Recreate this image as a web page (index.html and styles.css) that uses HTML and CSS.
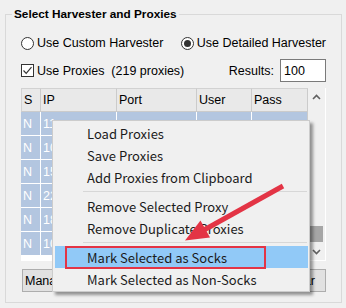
FILE: index.html
```html
<!DOCTYPE html>
<html lang="en">

<head>
    <meta charset="UTF-8">
    <meta name="viewport" content="width=device-width, initial-scale=1.0">
    <title>Select Harvester and Proxies</title>
    <link rel="stylesheet" href="styles.css">
</head>

<body>
    <div class="window">
        <fieldset class="group">
            <legend>Select Harvester and Proxies</legend>

            <div class="radios">
                <label class="opt first"><span class="radio"></span>Use Custom Harvester</label>
                <label class="opt"><span class="radio on"></span>Use Detailed Harvester</label>
            </div>

            <div class="proxy-row">
                <label class="opt">
                    <span class="check">
                        <svg width="11" height="11" viewBox="0 0 11 11">
                            <path d="M1.5 5.5 L4.2 8.3 L9.5 2.2" fill="none" stroke="#333" stroke-width="1.2" />
                        </svg>
                    </span>Use Proxies&nbsp; (219 proxies)
                </label>
                <div class="results">Results: <span class="field">100</span></div>
            </div>

            <div class="grid">
                <div class="table">
                    <div class="row head">
                        <span class="c s">S</span>
                        <span class="c ip">IP</span>
                        <span class="c port">Port</span>
                        <span class="c user">User</span>
                        <span class="c pass">Pass</span>
                    </div>
                    <div class="row sel">
                        <span class="c s">N</span><span class="c ip">11</span><span class="c port"></span><span class="c user"></span><span class="c pass"></span>
                    </div>
                    <div class="row sel">
                        <span class="c s">N</span><span class="c ip">10</span><span class="c port"></span><span class="c user"></span><span class="c pass"></span>
                    </div>
                    <div class="row sel">
                        <span class="c s">N</span><span class="c ip">15</span><span class="c port"></span><span class="c user"></span><span class="c pass"></span>
                    </div>
                    <div class="row sel">
                        <span class="c s">N</span><span class="c ip">22</span><span class="c port"></span><span class="c user"></span><span class="c pass"></span>
                    </div>
                    <div class="row sel">
                        <span class="c s">N</span><span class="c ip">18</span><span class="c port"></span><span class="c user"></span><span class="c pass"></span>
                    </div>
                    <div class="row sel">
                        <span class="c s">N</span><span class="c ip">10</span><span class="c port"></span><span class="c user"></span><span class="c pass"></span>
                    </div>
                </div>
                <div class="vscroll">
                    <span class="sbtn">
                        <svg width="9" height="6" viewBox="0 0 9 6">
                            <path d="M1 5 L4.5 1.5 L8 5" fill="none" stroke="#606060" stroke-width="1.6" />
                        </svg>
                    </span>
                    <span class="track"><span class="thumb"></span></span>
                    <span class="sbtn">
                        <svg width="9" height="6" viewBox="0 0 9 6">
                            <path d="M1 1 L4.5 4.5 L8 1" fill="none" stroke="#606060" stroke-width="1.6" />
                        </svg>
                    </span>
                </div>
            </div>

            <div class="buttons">
                <button class="btn manage">Manage...</button>
                <button class="btn clear">Clear</button>
            </div>
        </fieldset>

        <!-- context menu over the grid -->
        <ul class="menu">
            <li>Load Proxies</li>
            <li>Save Proxies</li>
            <li>Add Proxies from Clipboard</li>
            <li class="sep"></li>
            <li>Remove Selected Proxy</li>
            <li>Remove Duplicate Proxies</li>
            <li class="sep"></li>
            <li class="hover">Mark Selected as Socks<span class="mark"></span></li>
            <li>Mark Selected as Non-Socks</li>
        </ul>

        <svg class="arrow" width="346" height="308" viewBox="0 0 346 308">
            <line x1="283" y1="186" x2="204" y2="230" stroke="#e33445" stroke-width="5" />
            <polygon points="185,240.5 210,237.5 200.5,220.5" fill="#e33445" />
        </svg>
    </div>
</body>

</html>
```

FILE: styles.css
```css
* {
    margin: 0;
    padding: 0;
    box-sizing: border-box;
}

body {
    background-color: #f0f0f0;
    font-family: "Liberation Sans", Arial, sans-serif;
    font-size: 12.5px;
    color: #000;
}

ul,
li {
    list-style: none;
}

.window {
    position: relative;
    width: 346px;
    height: 308px;
    padding: 6px 4px 0 5px;
}

.group {
    width: 337px;
    min-width: 0;
    height: 297px;
    border: 1px solid #d9d9d9;
    padding: 13px 15px 0 15px;
}

.group legend {
    margin-left: -9px;
    padding: 0 2px;
    font-size: 11.8px;
    font-weight: bold;
    line-height: 16px;
}

.radios {
    display: flex;
    height: 16px;
    align-items: center;
}

.opt {
    display: flex;
    align-items: center;
    white-space: nowrap;
}

.opt.first {
    width: 160px;
}

.radio {
    width: 13px;
    height: 13px;
    margin-right: 3px;
    border: 1px solid #333;
    border-radius: 50%;
    background-color: #fff;
    display: flex;
    justify-content: center;
    align-items: center;
}

.radio.on::after {
    content: "";
    width: 7px;
    height: 7px;
    border-radius: 50%;
    background-color: #333;
}

.check {
    width: 13px;
    height: 13px;
    margin-right: 3px;
    border: 1px solid #333;
    background-color: #fff;
    display: flex;
}

.proxy-row {
    margin-top: 8px;
    height: 23px;
    display: flex;
    justify-content: space-between;
    align-items: center;
}

.results {
    display: flex;
    align-items: center;
}

.field {
    width: 46px;
    height: 23px;
    margin-left: 6px;
    padding-left: 3px;
    border: 1px solid #7a7a7a;
    background-color: #fff;
    display: flex;
    align-items: center;
}

.grid {
    margin-top: 6px;
    height: 173px;
    display: flex;
    background-color: #fff;
}

.table {
    width: 287px;
}

.row {
    height: 24px;
    display: flex;
}

.c {
    height: 24px;
    padding-left: 2px;
    display: flex;
    align-items: center;
    overflow: hidden;
    white-space: nowrap;
}

.s {
    width: 20px;
}

.ip {
    width: 76px;
}

.port {
    width: 80px;
}

.user {
    width: 55px;
}

.pass {
    width: 56px;
}

.head .c {
    background-color: #e9e9e9;
    border-top: 1px solid #d2d2d2;
    border-right: 1px solid #cbcbcb;
    border-bottom: 1px solid #cbcbcb;
}

.head .s {
    border-left: 1px solid #d2d2d2;
}

.sel .c {
    background-color: #b3c6e0;
    color: #fff;
    border-right: 1px solid #fff;
    border-bottom: 1px solid #fff;
}

.sel .pass {
    border-right: 1px solid #cbcbcb;
}

.vscroll {
    width: 18px;
    height: 172px;
    background-color: #f0f0f0;
    border-right: 1px solid #fff;
    display: flex;
    flex-direction: column;
}

.sbtn {
    height: 17px;
    display: flex;
    justify-content: center;
    align-items: center;
}

.track {
    flex: 1;
    display: flex;
    flex-direction: column;
    justify-content: flex-end;
    padding: 0 2px 1px 2px;
}

.thumb {
    height: 16px;
    background-color: #a6a6a6;
}

.buttons {
    margin-top: 8px;
    display: flex;
    justify-content: space-between;
    padding-left: 1px;
}

.btn {
    height: 23px;
    padding-left: 2px;
    border: 1px solid #adadad;
    background-color: #e1e1e1;
    font-family: "Liberation Sans", Arial, sans-serif;
    font-size: 12.5px;
    color: #000;
    text-align: left;
}

.manage {
    width: 80px;
}

.clear {
    width: 60px;
    padding-left: 18px;
}

.menu {
    position: absolute;
    left: 52px;
    top: 120px;
    width: 258px;
    height: 172px;
    padding: 1px 0;
    border: 1px solid #cccccc;
    background-color: #f0f0f0;
    box-shadow: 3px 3px 3px rgba(0, 0, 0, 0.4);
    font-family: "Noto Sans CJK SC", sans-serif;
    font-size: 13px;
    color: #1b1b1b;
}

.menu li {
    position: relative;
    height: 22px;
    margin: 0 1px 0 2px;
    padding-left: 32px;
    display: flex;
    align-items: center;
}

.menu li.sep {
    height: 7px;
    padding: 0;
    margin: 0 2px 0 30px;
    border-top: 3px solid #f0f0f0;
    border-bottom: 3px solid #f0f0f0;
    background-color: #d7d7d7;
}

.menu li.hover {
    background-color: #91c9f7;
}

.mark {
    position: absolute;
    left: 10px;
    top: 0;
    width: 201px;
    height: 23px;
    border: 2px solid #e33445;
}

.arrow {
    position: absolute;
    left: 0;
    top: 0;
    pointer-events: none;
}
```
